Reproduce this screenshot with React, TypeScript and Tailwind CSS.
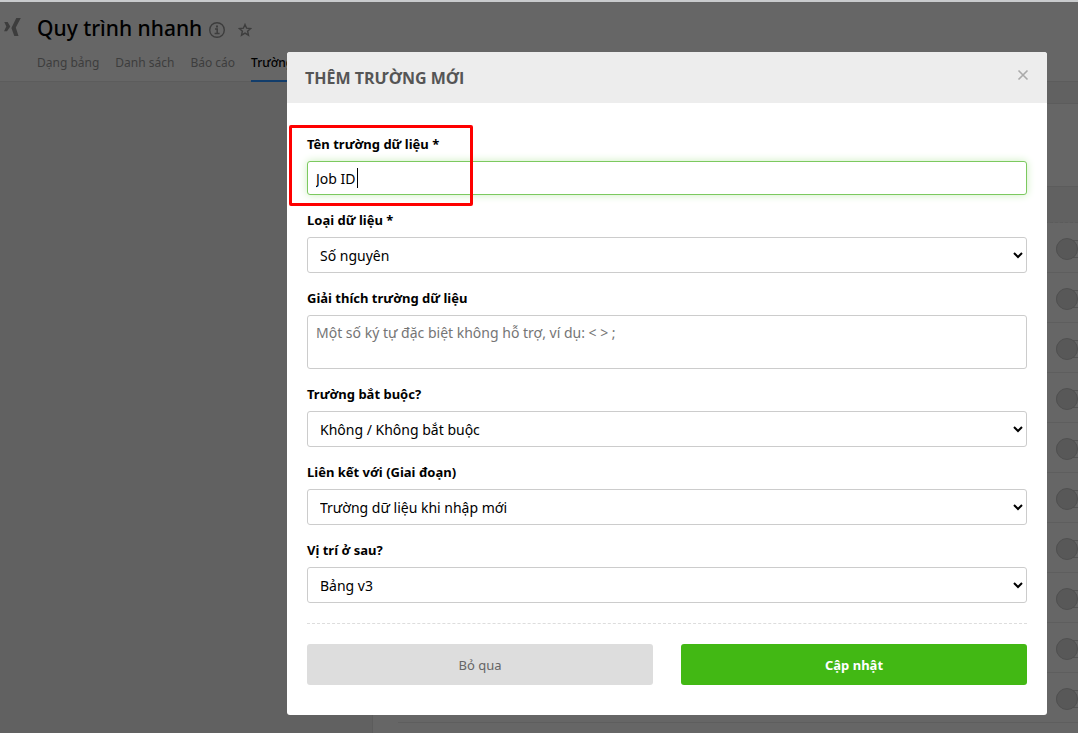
import type { ReactNode } from 'react'

const tabs = ['Dạng bảng', 'Danh sách', 'Báo cáo']
const rows = Array.from({ length: 10 }, (_, i) => i)

const control =
  'block w-full rounded-[3px] border border-[#ccc] bg-white text-sm text-black outline-none'

function Field({ id, label, children }: { id: string; label: string; children: ReactNode }) {
  return (
    <div>
      <label htmlFor={id} className="mb-[7px] block w-fit text-[13px] leading-5 font-bold text-black">
        {label}
      </label>
      {children}
    </div>
  )
}

function SelectField({ id, label, value }: { id: string; label: string; value: string }) {
  return (
    <Field id={id} label={label}>
      <div className="relative">
        <select id={id} defaultValue={value} className={`${control} h-9 appearance-none pt-0.5 pr-8 pl-3`}>
          <option>{value}</option>
        </select>
        <svg
          viewBox="0 0 10 8"
          className="pointer-events-none absolute top-3.5 right-1 h-2 w-2.5"
          fill="none"
          stroke="#000"
          strokeWidth="2"
          aria-hidden="true"
        >
          <path d="M1 2l4 4 4-4" />
        </svg>
      </div>
    </Field>
  )
}

function Logo() {
  return (
    <svg viewBox="0 0 18 20" className="mt-4 ml-1 h-5 w-[18px] shrink-0" fill="#3d3d3d" aria-hidden="true">
      <path d="M0.300 4H3.600L6.300 8.500 3 13.200H0L2.300 8.500z" />
      <path d="M12.300 0H16.800L11.800 9.500 14.500 18H10.300L7.400 10z" />
    </svg>
  )
}

function PageBehind() {
  return (
    <div className="flex min-h-screen flex-col bg-[#616161]">
      <header className="flex border-t-2 border-b border-t-[#c9cbcd] border-b-[#5c5c5c] bg-[#666]">
        <Logo />
        <div className="ml-[15px]">
          <div className="flex items-center pt-2.5">
            <h1 className="text-[21px] leading-8 font-medium text-black">Quy trình nhanh</h1>
            <svg viewBox="0 0 16 16" className="mt-1 ml-[7px] size-4" fill="none" stroke="#3d3d3d" aria-hidden="true">
              <circle cx="8" cy="8" r="7.300" strokeWidth="1.400" />
              <path d="M6 7h2.200v4.500M5.600 11.500h5" strokeWidth="1.500" />
              <path d="M7 4.400h2" strokeWidth="2" />
            </svg>
            <svg
              viewBox="0 0 14 14"
              className="mt-1 ml-[13px] size-3.5"
              fill="none"
              stroke="#3d3d3d"
              strokeWidth="1.400"
              aria-hidden="true"
            >
              <path d="M7 1.500l1.600 3.700 4 .3-3 2.700.9 4L7 10.100l-3.500 2.100.9-4-3-2.700 4-.3z" />
            </svg>
          </div>
          <nav className="-mb-px flex gap-4 text-xs leading-5 text-[#3d3d3d]">
            {tabs.map((t) => (
              <a key={t} href="#" className="pt-[9px] pb-[9px]">
                {t}
              </a>
            ))}
            <a href="#" className="border-b-2 border-[#123d6b] pt-[9px] pb-[7px] font-medium whitespace-nowrap text-black">
              Trường dữ liệu
            </a>
          </nav>
        </div>
      </header>
      <main className="mt-[21px] ml-[372px] flex-1 border-t border-l border-[#5c5c5c] bg-[#666]">
        <div className="h-[82px]" />
        <div className="ml-[25px] h-[37px] border-t border-b border-[#5c5c5c] bg-[#616161] [border-bottom-style:dashed]" />
        {rows.map((i) => (
          <div key={i} className="ml-[25px] flex h-[50px] items-center justify-end border-b border-[#5e5e5e] pt-0.5">
            <span className="-mr-5 flex h-[18px] w-[42px] items-center rounded-full border border-[#545454]">
              <span className="-ml-px size-[22px] shrink-0 rounded-full border border-[#505050] bg-[#585858]" />
            </span>
          </div>
        ))}
      </main>
    </div>
  )
}

export default function App() {
  return (
    <div className="relative h-screen overflow-hidden font-[Noto_Sans,sans-serif]">
      <PageBehind />
      <div className="absolute inset-0 flex items-start pt-[52px] pr-[31px] pl-[287px]">
        <section role="dialog" aria-labelledby="dialog-title" className="flex-1 overflow-hidden rounded-[3px] bg-white">
          <div className="flex h-[51px] items-center justify-between bg-[#ededed] px-[18px]">
            <h2 id="dialog-title" className="font-[Open_Sans,sans-serif] text-base font-bold text-[#555]">
              THÊM TRƯỜNG MỚI
            </h2>
            <button type="button" aria-label="Đóng" className="mb-1.5">
              <svg viewBox="0 0 12 12" className="size-3" stroke="#aaa" strokeWidth="1.600" aria-hidden="true">
                <path d="M1.500 1.500l9 9M10.500 1.500l-9 9" />
              </svg>
            </button>
          </div>
          <form className="px-5 pt-[31px] pb-[30px]">
            <div className="flex flex-col gap-[15px]">
              <div className="relative">
                <Field id="name" label="Tên trường dữ liệu *">
                  <div className="relative">
                    <input
                      id="name"
                      defaultValue="Job ID"
                      className="block h-[34px] w-full rounded-[3px] border border-[#7cc95f] bg-white px-2 text-sm text-black shadow-[0_0_8px_#cdeec0] outline-none"
                    />
                    <span className="absolute top-[7px] left-[50px] h-5 w-px bg-black" />
                  </div>
                </Field>
                <div className="pointer-events-none absolute -top-[9px] -left-[18px] h-[81px] w-[184px] rounded-[2px] border-3 border-[#fe0000]" />
              </div>
              <SelectField id="type" label="Loại dữ liệu *" value="Số nguyên" />
              <Field id="note" label="Giải thích trường dữ liệu">
                <textarea
                  id="note"
                  placeholder="Một số ký tự đặc biệt không hỗ trợ, ví dụ: < > ;"
                  className={`${control} h-[54px] resize-none px-2 py-[7px] placeholder:text-[#757575]`}
                />
              </Field>
              <SelectField id="required" label="Trường bắt buộc?" value="Không / Không bắt buộc" />
              <SelectField id="stage" label="Liên kết với (Giai đoạn)" value="Trường dữ liệu khi nhập mới" />
              <SelectField id="position" label="Vị trí ở sau?" value="Bảng v3" />
            </div>
            <div className="mt-5 grid grid-cols-2 gap-7 border-t border-dashed border-[#ddd] pt-5">
              <button type="button" className="h-[41px] rounded-[3px] bg-[#ddd] pt-0.5 text-[13px] text-[#666]">
                Bỏ qua
              </button>
              <button type="button" className="h-[41px] rounded-[3px] bg-[#42b814] pt-0.5 text-[13px] font-bold text-white">
                Cập nhật
              </button>
            </div>
          </form>
        </section>
      </div>
    </div>
  )
}
